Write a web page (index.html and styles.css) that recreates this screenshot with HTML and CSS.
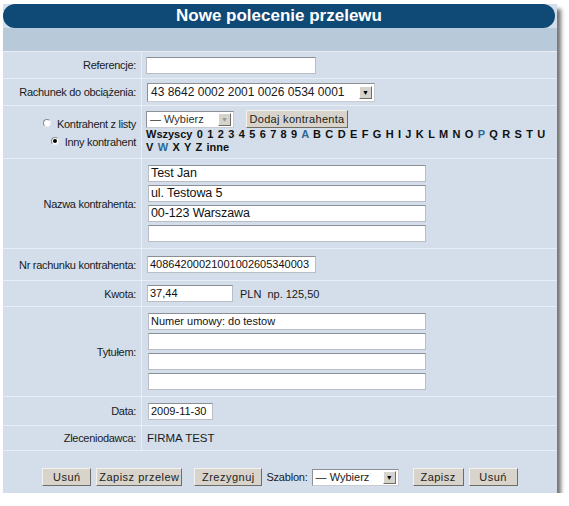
FILE: index.html
```html
<!DOCTYPE html>
<html lang="pl">
<head>
    <meta charset="UTF-8">
    <title>Nowe polecenie przelewu</title>
    <link rel="stylesheet" href="styles.css">
</head>
<body>
    <div class="panel">
        <div class="header">Nowe polecenie przelewu</div>
        <div class="band"></div>

        <div class="row h27">
            <div class="label">Referencje:</div>
            <div class="field"><div class="input w168"></div></div>
        </div>
        <div class="row h27">
            <div class="label">Rachunek do obciążenia:</div>
            <div class="field">
                <div class="select w226">43 8642 0002 2001 0026 0534 0001<span class="arrow">&#9660;</span></div>
            </div>
        </div>
        <div class="row h53">
            <div class="label radios">
                <div class="radio-line"><span class="radio"></span>Kontrahent z listy</div>
                <div class="radio-line"><span class="radio checked"></span>Inny kontrahent</div>
            </div>
            <div class="field top">
                <div class="line">
                    <div class="select w86 small dim">— Wybierz<span class="arrow grey">&#9660;</span></div>
                    <button class="btn add">Dodaj kontrahenta</button>
                </div>
                <div class="letters">
                    Wszyscy 0 1 2 3 4 5 6 7 8 9 <span class="hl">A</span> B C D E F G H I J K L M N O <span class="hl">P</span> Q R S T U<br>
                    V <span class="hl">W</span> X Y Z inne
                </div>
            </div>
        </div>
        <div class="row h90">
            <div class="label">Nazwa kontrahenta:</div>
            <div class="field stack">
                <div class="input w277 big">Test Jan</div>
                <div class="input w277 big">ul. Testowa 5</div>
                <div class="input w277 big">00-123 Warszawa</div>
                <div class="input w277 big"></div>
            </div>
        </div>
        <div class="row h32">
            <div class="label">Nr rachunku kontrahenta:</div>
            <div class="field"><div class="input w167">40864200021001002605340003</div></div>
        </div>
        <div class="row h26">
            <div class="label">Kwota:</div>
            <div class="field">
                <div class="input w84">37,44</div>
                <span class="unit">PLN</span>
                <span class="hint">np. 125,50</span>
            </div>
        </div>
        <div class="row h90">
            <div class="label">Tytułem:</div>
            <div class="field stack">
                <div class="input w277">Numer umowy: do testow</div>
                <div class="input w277"></div>
                <div class="input w277"></div>
                <div class="input w277"></div>
            </div>
        </div>
        <div class="row h29">
            <div class="label">Data:</div>
            <div class="field"><div class="input w63">2009-11-30</div></div>
        </div>
        <div class="row h25">
            <div class="label">Zleceniodawca:</div>
            <div class="field"><span class="value">FIRMA TEST</span></div>
        </div>
        <div class="actions">
            <button class="btn b49">Usuń</button>
            <button class="btn b86">Zapisz przelew</button>
            <button class="btn b68">Zrezygnuj</button>
            <span class="szablon">Szablon:</span>
            <div class="select w85 small">— Wybierz<span class="arrow">&#9660;</span></div>
            <button class="btn b51">Zapisz</button>
            <button class="btn b49 last">Usuń</button>
        </div>
    </div>
</body>
</html>
```

FILE: styles.css
```css
body {
    margin: 0 0 12px 0;
    background: #fff;
    font-family: "Liberation Sans", Arial, sans-serif;
    font-size: 11px;
    color: #1a1a1a;
}
.panel {
    width: 554px;
    margin: 4px 0 0 3px;
    background: #d3deea;
    box-shadow: 4px 5px 4px rgba(0,0,0,0.55);
}
.header {
    height: 24px;
    line-height: 24px;
    margin-right: 2px;
    background: #0f4a76;
    border-radius: 12px;
    color: #fff;
    font-weight: bold;
    font-size: 17px;
    text-align: center;
}
.band {
    height: 23px;
    background: #b8c9d9;
}
.row {
    display: grid;
    grid-template-columns: 139px 1fr;
    border-top: 1px solid #e8eef5;
}
.h25 { height: 24px; }
.h26 { height: 25px; }
.h27 { height: 26px; }
.h29 { height: 28px; }
.h32 { height: 31px; }
.h53 { height: 52px; }
.h90 { height: 89px; }
.label {
    display: flex;
    align-items: center;
    justify-content: flex-end;
    padding-right: 5px;
    border-right: 1px solid #e8eef5;
    letter-spacing: -0.3px;
}
.label.radios {
    flex-direction: column;
    align-items: flex-end;
    justify-content: center;
    padding-top: 2px;
}
.field {
    display: flex;
    align-items: center;
    padding-left: 4px;
}
.field.top {
    flex-direction: column;
    align-items: flex-start;
    justify-content: flex-start;
    padding-top: 4px;
}
.field.stack {
    flex-direction: column;
    align-items: flex-start;
    justify-content: center;
    gap: 3px;
    padding-left: 6px;
}
.input {
    height: 15px;
    line-height: 15px;
    background: #fff;
    border: 1px solid #b9bec5;
    border-top-color: #8a8f96;
    padding: 0 2px;
    font-size: 11px;
    color: #111;
    white-space: nowrap;
    overflow: hidden;
}
.input.big {
    font-size: 12.5px;
    letter-spacing: -0.1px;
}
.w63 { width: 59px; margin-left: 2px; }
.w84 { width: 80px; margin-left: 1px; }
.w167 { width: 163px; margin-left: 1px; }
.w168 { width: 164px; }
.w277 { width: 272px; }
.select {
    position: relative;
    height: 17px;
    line-height: 17px;
    background: #fff;
    border: 1px solid #8c9096;
    border-right-color: #c8ccd2;
    border-bottom-color: #c8ccd2;
    padding-left: 3px;
    font-size: 12px;
    white-space: nowrap;
}
.select.small {
    height: 15px;
    line-height: 15px;
    font-size: 11px;
}
.select.dim { color: #333; }
.w226 { width: 223px; margin-left: 1px; }
.w86 { width: 83px; }
.w85 { width: 82px; }
.arrow {
    position: absolute;
    right: 2px;
    top: 2px;
    width: 11px;
    height: 11px;
    line-height: 11px;
    background: #d6d3cc;
    border: 1px solid;
    border-color: #fff #6e6c66 #6e6c66 #fff;
    font-size: 7px;
    text-align: center;
    color: #000;
}
.select.small .arrow { top: 1px; }
.arrow.grey { color: #999; }
.line {
    display: flex;
    align-items: center;
    gap: 12px;
}
.btn {
    height: 18px;
    padding: 0;
    background: #d8d4cb;
    border: 1px solid;
    border-color: #f4f2ee #6f6c66 #6f6c66 #f4f2ee;
    font-family: "Liberation Sans", Arial, sans-serif;
    font-size: 11px;
    letter-spacing: 0.5px;
    color: #222;
    white-space: nowrap;
}
.btn.add {
    width: 102px;
    letter-spacing: 0.3px;
}
.letters {
    font-weight: bold;
    line-height: 13px;
    word-spacing: 1.3px;
    color: #111;
}
.hl { color: #2b6795; }
.radio-line {
    display: flex;
    align-items: center;
    height: 18px;
}
.radio {
    width: 6px;
    height: 6px;
    margin-right: 6px;
    margin-top: -3px;
    border: 1px solid #8a8a8a;
    border-right-color: #eee;
    border-bottom-color: #eee;
    border-radius: 50%;
    background: #fff;
    position: relative;
}
.radio.checked::after {
    content: "";
    position: absolute;
    left: 1px;
    top: 1px;
    width: 4px;
    height: 4px;
    border-radius: 50%;
    background: #000;
}
.unit { margin-left: 7px; }
.hint { margin-left: 6px; }
.value {
    font-size: 11.5px;
    margin-left: 1px;
}
.actions {
    border-top: 1px solid #e8eef5;
    height: 43px;
    display: flex;
    align-items: center;
    justify-content: center;
    padding-top: 10px;
    box-sizing: border-box;
}
.b49 { width: 49px; }
.b86 { width: 86px; margin-left: 5px; }
.b68 { width: 68px; margin-left: 12px; }
.szablon { margin-left: 4px; margin-right: 4px; letter-spacing: -0.2px; }
.b51 { width: 51px; margin-left: 14px; }
.b49.last { margin-left: 5px; }
```
